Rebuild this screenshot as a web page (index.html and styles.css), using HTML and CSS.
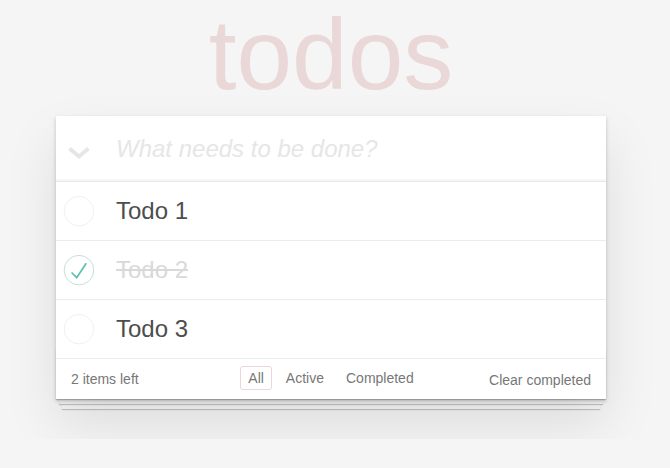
FILE: index.html
```html
<!DOCTYPE html>
<html lang="en">
<head>
<meta charset="utf-8">
<title>todos</title>
<link rel="stylesheet" href="styles.css">
</head>
<body>
<section class="todoapp">
  <h1 class="title">todos</h1>
  <div class="card">
    <header class="header">
      <span class="toggle-all">
        <svg width="24" height="14" viewBox="0 0 24 14"><polyline points="2.5,2.5 12,10.5 21.5,2.5" fill="none" stroke="#e6e6e6" stroke-width="4"/></svg>
      </span>
      <input class="new-todo" placeholder="What needs to be done?">
    </header>
    <ul class="todo-list">
      <li class="todo">
        <svg class="toggle" width="40" height="40" viewBox="-10 -18 100 135"><circle cx="50" cy="50" r="50" fill="none" stroke="#ededed" stroke-width="3"/></svg>
        <span class="label">Todo 1</span>
      </li>
      <li class="todo completed">
        <svg class="toggle" width="40" height="40" viewBox="-10 -18 100 135"><circle cx="50" cy="50" r="50" fill="none" stroke="#bddad5" stroke-width="3"/><path fill="#5dc2af" d="M72 25L42 71 27 56l-4 4 20 20 34-52z"/></svg>
        <span class="label">Todo 2</span>
      </li>
      <li class="todo">
        <svg class="toggle" width="40" height="40" viewBox="-10 -18 100 135"><circle cx="50" cy="50" r="50" fill="none" stroke="#ededed" stroke-width="3"/></svg>
        <span class="label">Todo 3</span>
      </li>
    </ul>
    <footer class="footer">
      <span class="todo-count">2 items left</span>
      <ul class="filters">
        <li><a class="filter selected">All</a></li>
        <li><a class="filter">Active</a></li>
        <li><a class="filter">Completed</a></li>
      </ul>
      <span class="clear-completed">Clear completed</span>
    </footer>
  </div>
</section>
</body>
</html>
```
FILE: styles.css
```css
html, body {
  margin: 0;
  padding: 0;
}
body {
  background: #f5f5f5;
  color: #4d4d4d;
  font: 14px "Liberation Sans", Arial, sans-serif;
  line-height: 1.4em;
}
.todoapp {
  width: 550px;
  margin: 0 0 40px 56px;
}
.title {
  margin: 4px 0 12px;
  font-size: 100px;
  line-height: 100px;
  font-weight: 400;
  text-align: center;
  color: rgba(175, 47, 47, 0.15);
}
.card {
  background: #fff;
  box-shadow: 0 2px 4px 0 rgba(0, 0, 0, 0.2), 0 25px 50px 0 rgba(0, 0, 0, 0.1);
}
.header {
  display: flex;
  align-items: center;
  height: 65px;
  box-shadow: inset 0 -2px 1px rgba(0, 0, 0, 0.03);
}
.toggle-all {
  flex: none;
  width: 45px;
  display: flex;
  justify-content: center;
  margin-top: 8px;
}
.new-todo {
  flex: 1;
  border: none;
  outline: none;
  background: transparent;
  padding: 0 16px 0 15px;
  font: 24px "Liberation Sans", Arial, sans-serif;
  line-height: 34px;
  height: 34px;
  color: #4d4d4d;
}
.new-todo::placeholder {
  font-style: italic;
  color: #e6e6e6;
}
.todo-list {
  margin: 0;
  padding: 0;
  list-style: none;
  border-top: 1px solid #e6e6e6;
}
.todo {
  display: flex;
  align-items: center;
  border-bottom: 1px solid #ededed;
  font-size: 24px;
}
.toggle {
  flex: none;
  display: block;
}
.label {
  padding: 15px 60px 15px 20px;
  line-height: 28px;
  color: #4d4d4d;
}
.completed .label {
  color: #d9d9d9;
  text-decoration: line-through;
}
.footer {
  position: relative;
  display: grid;
  grid-template-columns: 1fr auto 1fr;
  grid-template-rows: 20px;
  align-items: center;
  color: #777;
  padding: 10px 15px;
  line-height: 20px;
}
.footer::before {
  content: "";
  position: absolute;
  right: 0;
  bottom: 0;
  left: 0;
  height: 50px;
  overflow: hidden;
  box-shadow: 0 1px 1px rgba(0, 0, 0, 0.2), 0 8px 0 -3px #f6f6f6, 0 9px 1px -3px rgba(0, 0, 0, 0.2), 0 16px 0 -6px #f6f6f6, 0 17px 1px -6px rgba(0, 0, 0, 0.2);
  z-index: -1;
}
.todo-count {
  text-align: left;
}
.filters {
  display: flex;
  margin: -3px 0 -1px;
  padding: 0;
  list-style: none;
}
.filters li {
  margin: 0 3px;
}
.filter {
  display: block;
  padding: 3px 7px;
  line-height: 16px;
  border: 1px solid transparent;
  border-radius: 3px;
  color: inherit;
}
.filter.selected {
  border-color: rgba(175, 47, 47, 0.2);
}
.clear-completed {
  text-align: right;
  line-height: 20px;
  margin-top: 2px;
}
```
